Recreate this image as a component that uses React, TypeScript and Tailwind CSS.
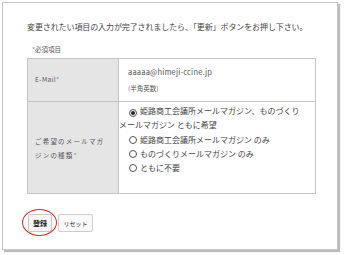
const jp = "font-['Noto_Sans_CJK_JP','Noto_Sans',sans-serif]";

function Radio({ checked = false }: { checked?: boolean }) {
  return (
    <span className="mr-[3px] inline-flex h-[8px] w-[8px] translate-y-[1px] items-center justify-center rounded-full border border-[#555] bg-white">
      {checked && <span className="h-[4px] w-[4px] rounded-full bg-[#222]" />}
    </span>
  );
}

export default function App() {
  return (
    <div className={`h-[255px] w-[344px] bg-white pl-[2px] pt-[2px] text-[#444] ${jp}`}>
      <div className="h-[248px] w-[336px] border border-[#c6c6c6] bg-white px-[24px] pt-[18px] shadow-[2px_2px_1px_#bcbcbc]">
        <p className="text-[8px] leading-[12px] tracking-[-0.1px] text-[#444]">
          変更されたい項目の入力が完了されましたら、「更新」ボタンをお押し下さい。
        </p>
        <p className="mt-[11px] pl-[5px] text-[6.5px] leading-[10px] text-[#555]">
          <span className="text-[#5b8fc4]">*</span>必須項目
        </p>
        <table className="mt-[4px] w-[289px] border-collapse">
          <tbody>
            <tr className="h-[43px]">
              <th className="w-[91px] border border-[#c4c4c4] bg-[#e5e5e5] pl-[7px] text-left align-middle text-[6.5px] font-normal tracking-[0.4px] text-[#555]">
                E-Mail<span className="text-[#5b8fc4]">*</span>
              </th>
              <td className="border border-[#c4c4c4] pl-[9px] align-middle text-[#555]">
                <p className="text-[7.5px] leading-[10px] tracking-[0.2px]">aaaaa@himeji-ccine.jp</p>
                <p className="mt-[6px] text-[6.5px] leading-[10px]">(半角英数)</p>
              </td>
            </tr>
            <tr className="h-[92px]">
              <th className="border border-[#c4c4c4] bg-[#e5e5e5] pl-[7px] text-left align-middle text-[6.5px] font-normal leading-[14px] tracking-[1.2px] text-[#555]">
                ご希望のメールマガ
                <br />
                ジンの種類<span className="text-[#5b8fc4]">*</span>
              </th>
              <td className="border border-[#c4c4c4] pt-[2px] align-top text-[8px] leading-[14.3px] text-[#444]">
                <div className="pl-[10px]">
                  <Radio checked />
                  姫路商工会議所メールマガジン、ものづくり
                </div>
                <div className="pl-[0px]">メールマガジン ともに希望</div>
                <div className="pl-[10px]">
                  <Radio />
                  姫路商工会議所メールマガジン のみ
                </div>
                <div className="pl-[10px]">
                  <Radio />
                  ものづくりメールマガジン のみ
                </div>
                <div className="pl-[10px]">
                  <Radio />
                  ともに不要
                </div>
              </td>
            </tr>
          </tbody>
        </table>
        <div className="mt-[20px] flex items-center gap-[6px] pl-[1px]">
          <div className="relative">
            <button className="flex h-[18px] w-[24px] items-center justify-center rounded-[2px] border border-[#c8c8c8] bg-[#f4f4f4] text-[7px] font-bold text-[#222]">
              登録
            </button>
            <span className="pointer-events-none absolute left-[-6px] top-[-5px] h-[27px] w-[35px] rounded-[50%] border-[1.5px] border-[#e0242a]" />
          </div>
          <button className="flex h-[18px] w-[35px] items-center justify-center rounded-[2px] border border-[#cdcdcd] bg-[#fafafa] text-[6px] text-[#333]">
            リセット
          </button>
        </div>
      </div>
    </div>
  );
}
